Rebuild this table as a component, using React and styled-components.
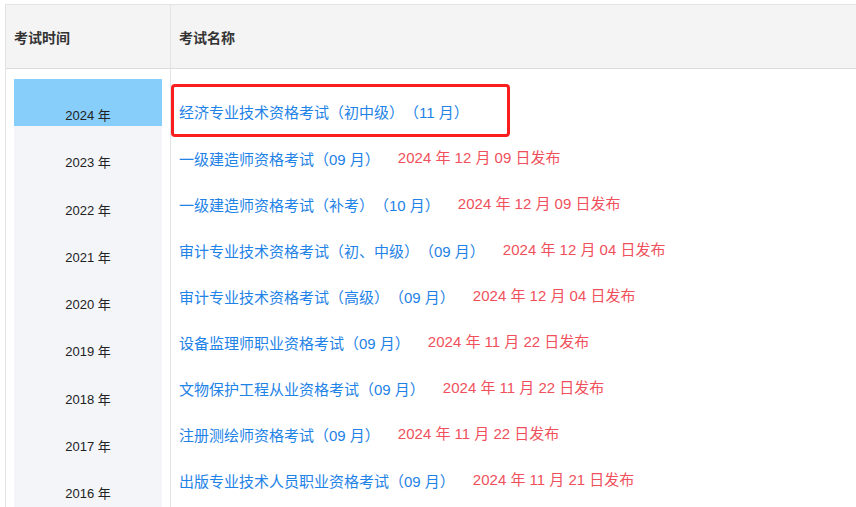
import React, { useState } from "react";
import styled, { createGlobalStyle } from "styled-components";

const GlobalStyle = createGlobalStyle`
    html, body {
        margin: 0;
        padding: 0;
        background: #fff;
        overflow: hidden;
    }
    body {
        font-family: "Liberation Sans", "Noto Sans CJK SC", sans-serif;
        text-spacing-trim: space-all;
    }
`;

const Page = styled.div`
    padding: 4px 0 0 5px;
    width: 1000px;
    height: 503px;
    overflow: hidden;
`;

const Table = styled.div`
    display: grid;
    grid-template-columns: 165px 1fr;
    border-top: 1px solid #e3e3e3;
    border-left: 1px solid #e3e3e3;
`;

const HeadCell = styled.div`
    height: 63px;
    background: #f4f4f4;
    border-bottom: 1px solid #dcdcdc;
    border-right: 1px solid #e3e3e3;
    display: flex;
    align-items: center;
    padding-left: 8px;
    font-size: 14px;
    font-weight: bold;
    color: #333;
`;

const YearCell = styled.div`
    border-right: 1px solid #e3e3e3;
    padding: 10px 8px 0 8px;
    height: 500px;
`;

const YearList = styled.div`
    background: #f4f5f9;
    height: 100%;
`;

const YearItem = styled.div`
    height: 47.3px;
    box-sizing: border-box;
    padding-top: 28px;
    line-height: 18px;
    text-align: center;
    font-size: 13px;
    color: #222;
    background: ${(p) => (p.$active ? "#87cefa" : "transparent")};
    cursor: pointer;
`;

const ExamCell = styled.div`
    padding: 15px 0 0 8px;
`;

const ExamRow = styled.div`
    height: 46px;
    display: flex;
    align-items: center;
    font-size: 15px;
    white-space: nowrap;
`;

const HighlightRow = styled(ExamRow)`
    height: 53px;
    box-sizing: border-box;
    width: 339px;
    margin-left: -8px;
    margin-bottom: -2px;
    padding: 2px 0 0 5px;
    border: 3px solid #fa1e1e;
    border-radius: 4px;
`;

const ExamLink = styled.a`
    color: #1e82e6;
    text-decoration: none;
`;

const PubDate = styled.span`
    color: #f0505c;
    margin-left: 18px;
    margin-bottom: 4px;
`;

const years = [2024, 2023, 2022, 2021, 2020, 2019, 2018, 2017, 2016];

const exams = [
    { name: "一级建造师资格考试（09 月）", date: "2024 年 12 月 09 日发布" },
    { name: "一级建造师资格考试（补考）（10 月）", date: "2024 年 12 月 09 日发布" },
    { name: "审计专业技术资格考试（初、中级）（09 月）", date: "2024 年 12 月 04 日发布" },
    { name: "审计专业技术资格考试（高级）（09 月）", date: "2024 年 12 月 04 日发布" },
    { name: "设备监理师职业资格考试（09 月）", date: "2024 年 11 月 22 日发布" },
    { name: "文物保护工程从业资格考试（09 月）", date: "2024 年 11 月 22 日发布" },
    { name: "注册测绘师资格考试（09 月）", date: "2024 年 11 月 22 日发布" },
    { name: "出版专业技术人员职业资格考试（09 月）", date: "2024 年 11 月 21 日发布" },
];

export default function App() {
    const [year, setYear] = useState(2024);
    return (
        <Page>
            <GlobalStyle />
            <Table>
                <HeadCell>考试时间</HeadCell>
                <HeadCell>考试名称</HeadCell>
                <YearCell>
                    <YearList>
                        {years.map((y) => (
                            <YearItem key={y} $active={y === year} onClick={() => setYear(y)}>
                                {y} 年
                            </YearItem>
                        ))}
                    </YearList>
                </YearCell>
                <ExamCell>
                    <HighlightRow>
                        <ExamLink href="#">经济专业技术资格考试（初中级）（11 月）</ExamLink>
                    </HighlightRow>
                    {exams.map((e) => (
                        <ExamRow key={e.name}>
                            <ExamLink href="#">{e.name}</ExamLink>
                            <PubDate>{e.date}</PubDate>
                        </ExamRow>
                    ))}
                </ExamCell>
            </Table>
        </Page>
    );
}
